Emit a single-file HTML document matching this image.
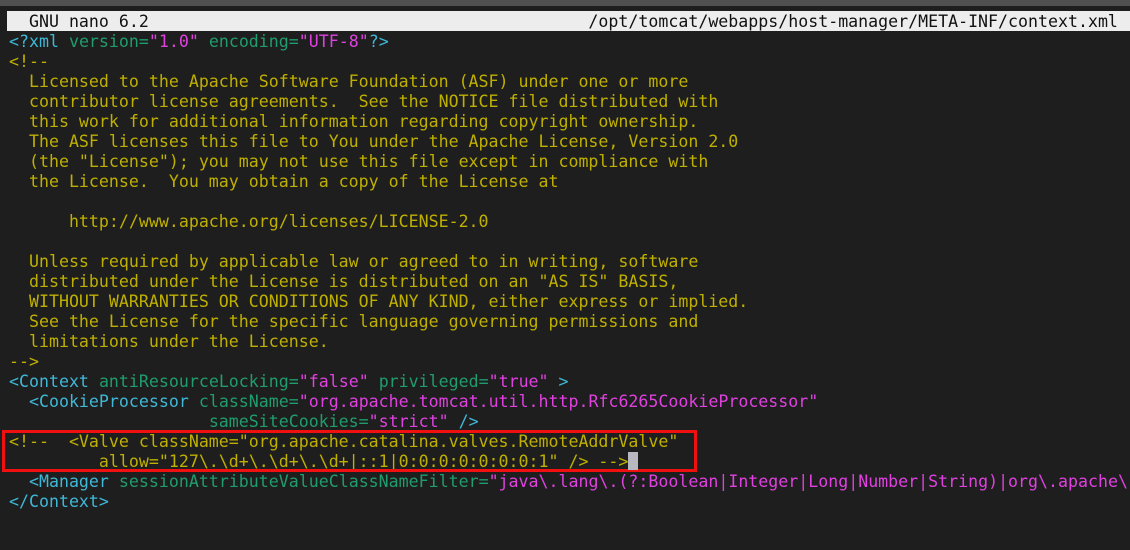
<!DOCTYPE html>
<html><head><meta charset="utf-8"><style>
html,body{margin:0;padding:0;width:1130px;height:550px;overflow:hidden;background:#1e1e1e;}
#top{position:absolute;left:0;top:0;width:1130px;height:6px;background:#505050;}
#title{position:absolute;left:7px;top:11px;width:1123px;height:20px;background:#ededed;}
pre{margin:0;position:absolute;left:9px;font-family:"DejaVu Sans Mono","Liberation Mono",monospace;font-size:16.6px;line-height:20px;white-space:pre;}
#t{top:12px;left:9px;color:#111;}
#code{top:32px;color:#c2b300;}
.c{color:#bfb000}.g{color:#3fb8d8}.a{color:#1f9d6e}.s{color:#e040e0}
#box{position:absolute;left:2px;top:430px;width:689px;height:36px;border:3px solid #f01010;}
#cur{position:absolute;left:628px;top:452px;width:10px;height:18px;background:#b8b8c0;}
</style></head><body>
<div id="top"></div>
<div id="title"></div>
<pre id="t">  GNU nano 6.2                                            /opt/tomcat/webapps/host-manager/META-INF/context.xml  </pre>
<pre id="code"><span class="g">&lt;?xml</span> <span class="a">version=</span><span class="s">"1.0"</span> <span class="a">encoding=</span><span class="s">"UTF-8"</span><span class="g">?&gt;</span>
<span class="c">&lt;!--
  Licensed to the Apache Software Foundation (ASF) under one or more
  contributor license agreements.  See the NOTICE file distributed with
  this work for additional information regarding copyright ownership.
  The ASF licenses this file to You under the Apache License, Version 2.0
  (the "License"); you may not use this file except in compliance with
  the License.  You may obtain a copy of the License at

      http://www.apache.org/licenses/LICENSE-2.0

  Unless required by applicable law or agreed to in writing, software
  distributed under the License is distributed on an "AS IS" BASIS,
  WITHOUT WARRANTIES OR CONDITIONS OF ANY KIND, either express or implied.
  See the License for the specific language governing permissions and
  limitations under the License.
--&gt;</span>
<span class="g">&lt;Context</span> <span class="a">antiResourceLocking=</span><span class="s">"false"</span> <span class="a">privileged=</span><span class="s">"true"</span> <span class="g">&gt;</span>
  <span class="g">&lt;CookieProcessor</span> <span class="a">className=</span><span class="s">"org.apache.tomcat.util.http.Rfc6265CookieProcessor"</span>
                    <span class="a">sameSiteCookies=</span><span class="s">"strict"</span> <span class="g">/&gt;</span>
<span class="c">&lt;!--  &lt;Valve className="org.apache.catalina.valves.RemoteAddrValve"
         allow="127\.\d+\.\d+\.\d+|::1|0:0:0:0:0:0:0:1" /&gt; --&gt;</span>
  <span class="g">&lt;Manager</span> <span class="a">sessionAttributeValueClassNameFilter=</span><span class="s">"java\.lang\.(?:Boolean|Integer|Long|Number|String)|org\.apache\</span>
<span class="g">&lt;/Context&gt;</span></pre>
<div id="box"></div>
<div id="cur"></div>
</body></html>
